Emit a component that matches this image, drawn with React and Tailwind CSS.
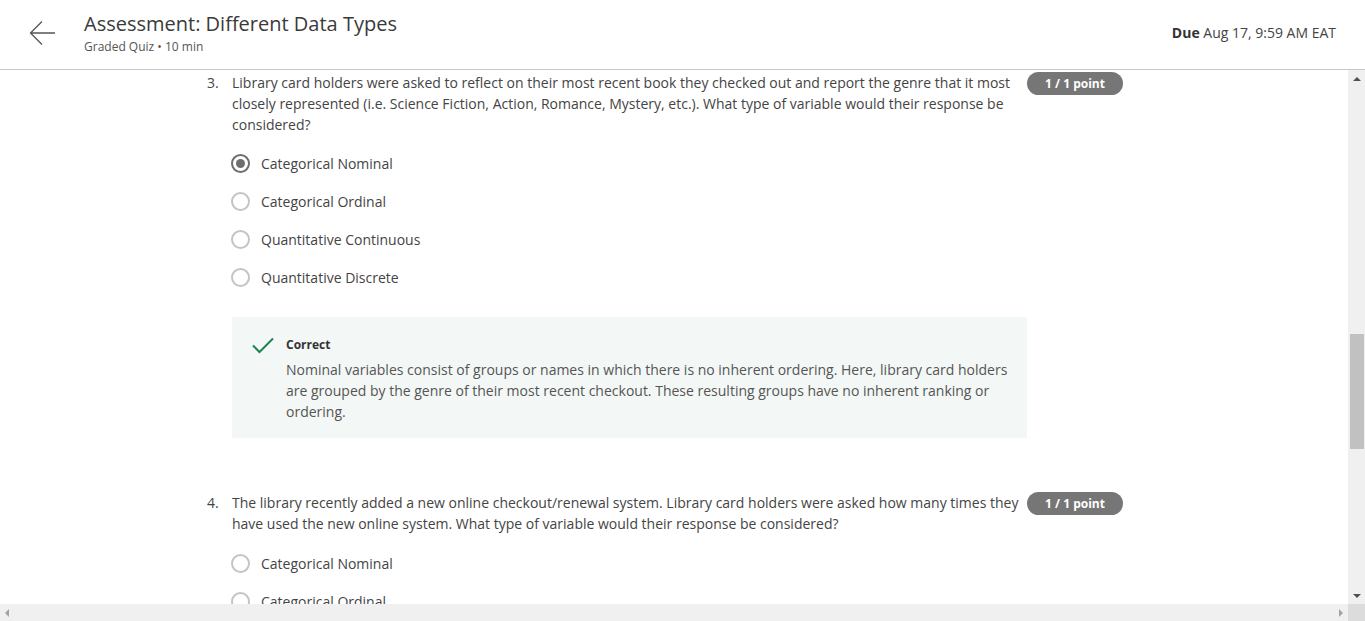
const FONT = { fontFamily: '"Open Sans", "Liberation Sans", sans-serif' }

function Radio({ checked, label }) {
  return (
    <div className="flex items-center h-[38px]">
      <span
        className={
          'w-[19px] h-[19px] rounded-full border-2 flex items-center justify-center shrink-0 ' +
          (checked ? 'border-[#6e6e6e]' : 'border-[#c4c4c4]')
        }
      >
        {checked && <span className="w-[9px] h-[9px] rounded-full bg-[#6e6e6e]" />}
      </span>
      <span className="ml-[11px] text-[14px] text-[#444]">{label}</span>
    </div>
  )
}

function Badge() {
  return (
    <div className="shrink-0 ml-[8px] w-[96px] h-[23px] rounded-full bg-[#767676] text-white text-[12px] font-bold flex items-center justify-center">
      1 / 1 point
    </div>
  )
}

function Question({ num, text, options, selected, gap = 'mt-[9px]' }) {
  return (
    <div className="w-[916px]">
      <div className="flex items-start">
        <div className="w-[25px] shrink-0 text-[14px] leading-[21px] text-[#444]">{num}.</div>
        <div className="flex-1 text-[14px] leading-[21px] text-[#444]">{text}</div>
        <Badge />
      </div>
      <div className={gap + ' pl-[24px]'}>
        {options.map((o) => (
          <Radio key={o} label={o} checked={o === selected} />
        ))}
      </div>
    </div>
  )
}

const OPTS = ['Categorical Nominal', 'Categorical Ordinal', 'Quantitative Continuous', 'Quantitative Discrete']

export default function App() {
  return (
    <div className="h-[621px] w-[1365px] flex flex-col overflow-hidden bg-white" style={FONT}>
      <header className="h-[70px] shrink-0 border-b border-[#c8c8c8] flex items-start">
        <div className="w-[84px] shrink-0 pl-[29px] pt-[20px]">
          <svg width="28" height="26" viewBox="0 0 28 26" fill="none" stroke="#555" strokeWidth="1.3">
            <path d="M26 13H2M13 1.5L1.5 13L13 24.5" />
          </svg>
        </div>
        <div className="flex-1 pt-[11px]">
          <div className="text-[20px] leading-[26px] text-[#3a3a3a]">Assessment: Different Data Types</div>
          <div className="mt-[2px] text-[12px] leading-[15px] text-[#555]">Graded Quiz • 10 min</div>
        </div>
        <div className="pt-[23px] pr-[29px] text-[14px] leading-[20px] text-[#444]">
          <span className="font-bold text-[#333]">Due</span> Aug 17, 9:59 AM EAT
        </div>
      </header>

      <div className="flex-1 flex min-h-0">
        <div className="flex-1 flex flex-col min-w-0">
          <main className="flex-1 overflow-hidden pl-[207px] pt-[2px]">
            <Question
              num={3}
              text="Library card holders were asked to reflect on their most recent book they checked out and report the genre that it most closely represented (i.e. Science Fiction, Action, Romance, Mystery, etc.). What type of variable would their response be considered?"
              options={OPTS}
              selected="Categorical Nominal"
            />
            <div className="ml-[25px] mt-[21px] w-[795px] h-[121px] bg-[#f3f8f6] pl-[20px] pt-[19px] flex">
              <svg width="22" height="17" viewBox="0 0 22 17" fill="none" stroke="#1f8354" strokeWidth="2" className="mt-[1px] shrink-0">
                <path d="M1 8.5L7.5 15L21 1.5" />
              </svg>
              <div className="ml-[12px] pr-[16px]">
                <div className="text-[12px] leading-[18px] font-bold text-[#333]">Correct</div>
                <div className="mt-[5px] text-[14px] leading-[21px] text-[#555]">
                  Nominal variables consist of groups or names in which there is no inherent ordering. Here, library card holders are grouped by the genre of their most recent checkout. These resulting groups have no inherent ranking or ordering.
                </div>
              </div>
            </div>
            <div className="mt-[54px]">
              <Question
                num={4}
                text="The library recently added a new online checkout/renewal system. Library card holders were asked how many times they have used the new online system. What type of variable would their response be considered?"
                options={OPTS}
                gap="mt-[10px]"
              />
            </div>
          </main>
          <div className="h-[17px] shrink-0 bg-[#f0f0f0] flex items-center justify-between px-[5px]">
            <span className="w-0 h-0 border-y-[4px] border-y-transparent border-r-[4px] border-r-[#a3a3a3]" />
            <span className="w-0 h-0 border-y-[4px] border-y-transparent border-l-[4px] border-l-[#a3a3a3]" />
          </div>
        </div>
        <div className="w-[17px] shrink-0 flex flex-col bg-[#f0f0f0]">
          <div className="h-[17px] flex items-center justify-center">
            <span className="w-0 h-0 border-x-[4px] border-x-transparent border-b-[4px] border-b-[#505050]" />
          </div>
          <div className="flex-1 relative">
            <div className="absolute left-[2px] right-[1px] top-[247px] h-[115px] bg-[#c1c1c1]" />
          </div>
          <div className="h-[17px] flex items-center justify-center">
            <span className="w-0 h-0 border-x-[4px] border-x-transparent border-t-[4px] border-t-[#505050]" />
          </div>
          <div className="h-[17px] bg-[#dcdcdc]" />
        </div>
      </div>
    </div>
  )
}
